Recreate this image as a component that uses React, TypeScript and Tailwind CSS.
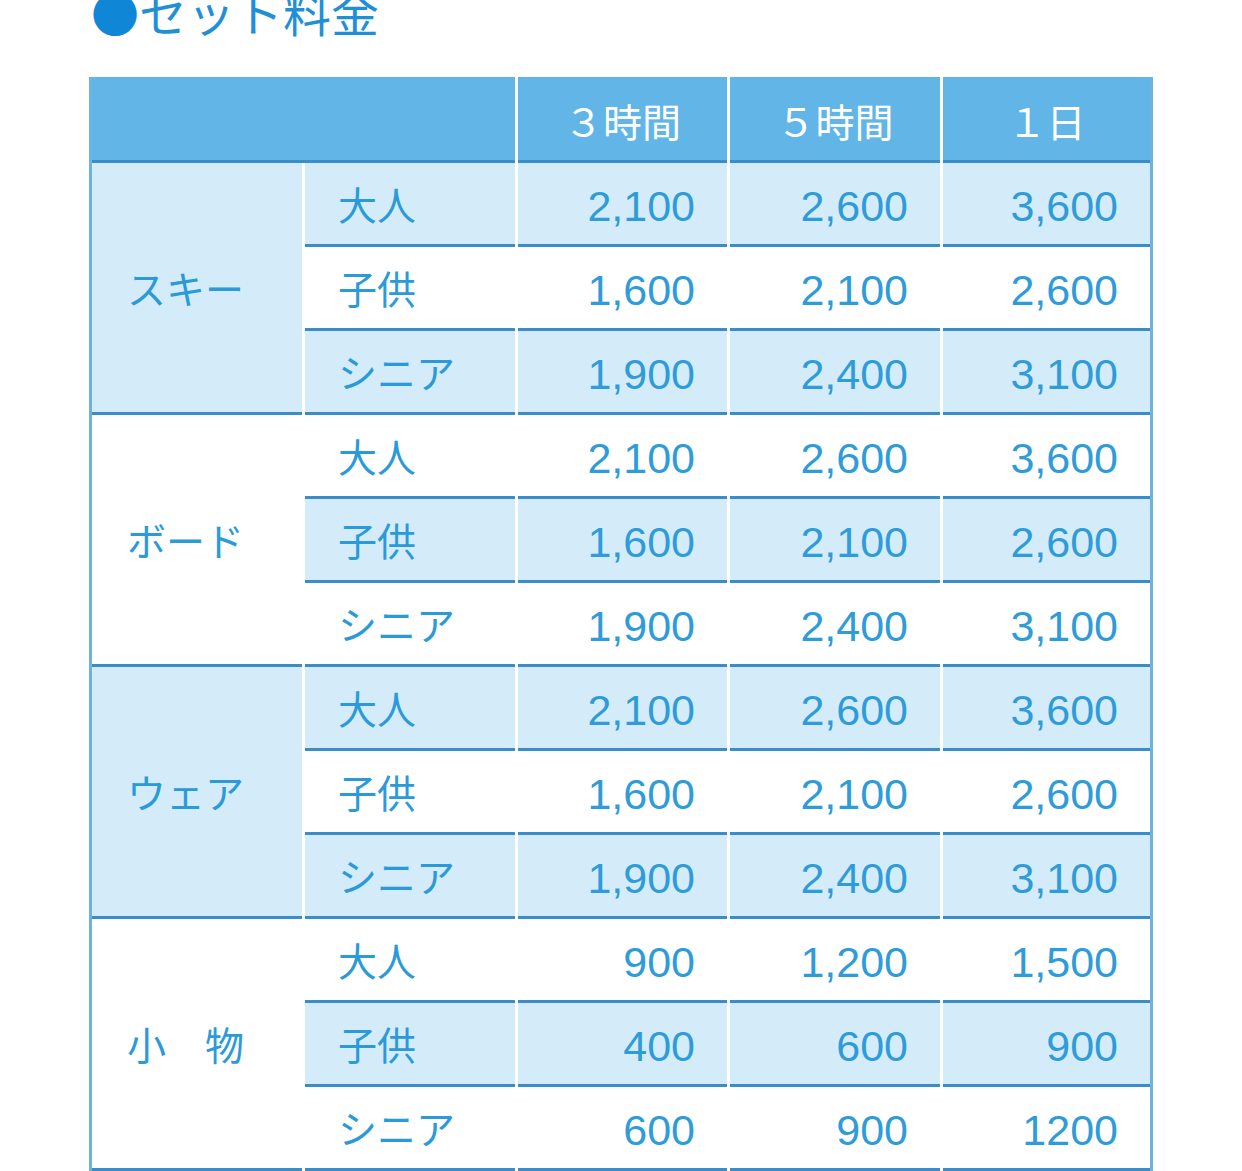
import React from 'react'

type Row = { label: string; prices: [string, string, string] }
type Group = { name: string; rows: Row[] }

const groups: Group[] = [
  {
    name: 'スキー',
    rows: [
      { label: '大人', prices: ['2,100', '2,600', '3,600'] },
      { label: '子供', prices: ['1,600', '2,100', '2,600'] },
      { label: 'シニア', prices: ['1,900', '2,400', '3,100'] },
    ],
  },
  {
    name: 'ボード',
    rows: [
      { label: '大人', prices: ['2,100', '2,600', '3,600'] },
      { label: '子供', prices: ['1,600', '2,100', '2,600'] },
      { label: 'シニア', prices: ['1,900', '2,400', '3,100'] },
    ],
  },
  {
    name: 'ウェア',
    rows: [
      { label: '大人', prices: ['2,100', '2,600', '3,600'] },
      { label: '子供', prices: ['1,600', '2,100', '2,600'] },
      { label: 'シニア', prices: ['1,900', '2,400', '3,100'] },
    ],
  },
  {
    name: '小　物',
    rows: [
      { label: '大人', prices: ['900', '1,200', '1,500'] },
      { label: '子供', prices: ['400', '600', '900'] },
      { label: 'シニア', prices: ['600', '900', '1200'] },
    ],
  },
]

const jp = "font-['Noto_Sans_CJK_JP',sans-serif]"
const cellBase = 'flex items-center border-b-[3px] border-[#3a8dc8]'

function HeaderCell({ children, className = '' }: { children?: React.ReactNode; className?: string }) {
  return (
    <div className={`${cellBase} justify-center bg-[#61b5e7] pt-[3px] text-[39px] text-white ${className}`}>
      {children}
    </div>
  )
}

export default function App() {
  return (
    <div className={`min-h-screen bg-white px-[89px] ${jp}`}>
      <h2 className="-mt-[13px] ml-[2px] flex h-[48px] items-center text-[48px] leading-none font-normal text-[#1f8fd6]">
        <span className="text-[#0f86d6]">●</span>
        <span>セット料金</span>
      </h2>

      <div className="mt-[42px] grid grid-cols-[210px_210px_209px_210px_207px] auto-rows-[84px] grid-rows-[86px] gap-x-[3px] border-x-[3px] border-[#6db3e0] bg-white">
        <HeaderCell className="col-span-2" />
        <HeaderCell>３時間</HeaderCell>
        <HeaderCell>５時間</HeaderCell>
        <HeaderCell>１日</HeaderCell>

        {groups.map((g, gi) => (
          <React.Fragment key={g.name}>
            <div
              className={`${cellBase} row-span-3 pl-[35px] text-[39px] text-[#2b9ad8] ${
                gi % 2 === 0 ? 'bg-[#d4ecfa]' : 'bg-white'
              }`}
            >
              {g.name}
            </div>
            {g.rows.map((r, ri) => {
              const shaded = (gi * 3 + ri) % 2 === 0
              const bg = shaded ? 'bg-[#d4ecfa]' : 'bg-white'
              return (
                <React.Fragment key={r.label}>
                  <div className={`${cellBase} ${bg} pl-[33px] text-[39px] text-[#2b9ad8]`}>{r.label}</div>
                  {r.prices.map((p, pi) => (
                    <div
                      key={pi}
                      className={`${cellBase} ${bg} justify-end pt-[5px] pr-[32px] font-['Liberation_Sans',sans-serif] text-[43px] text-[#2e9cd9]`}
                    >
                      {p}
                    </div>
                  ))}
                </React.Fragment>
              )
            })}
          </React.Fragment>
        ))}
      </div>
    </div>
  )
}
